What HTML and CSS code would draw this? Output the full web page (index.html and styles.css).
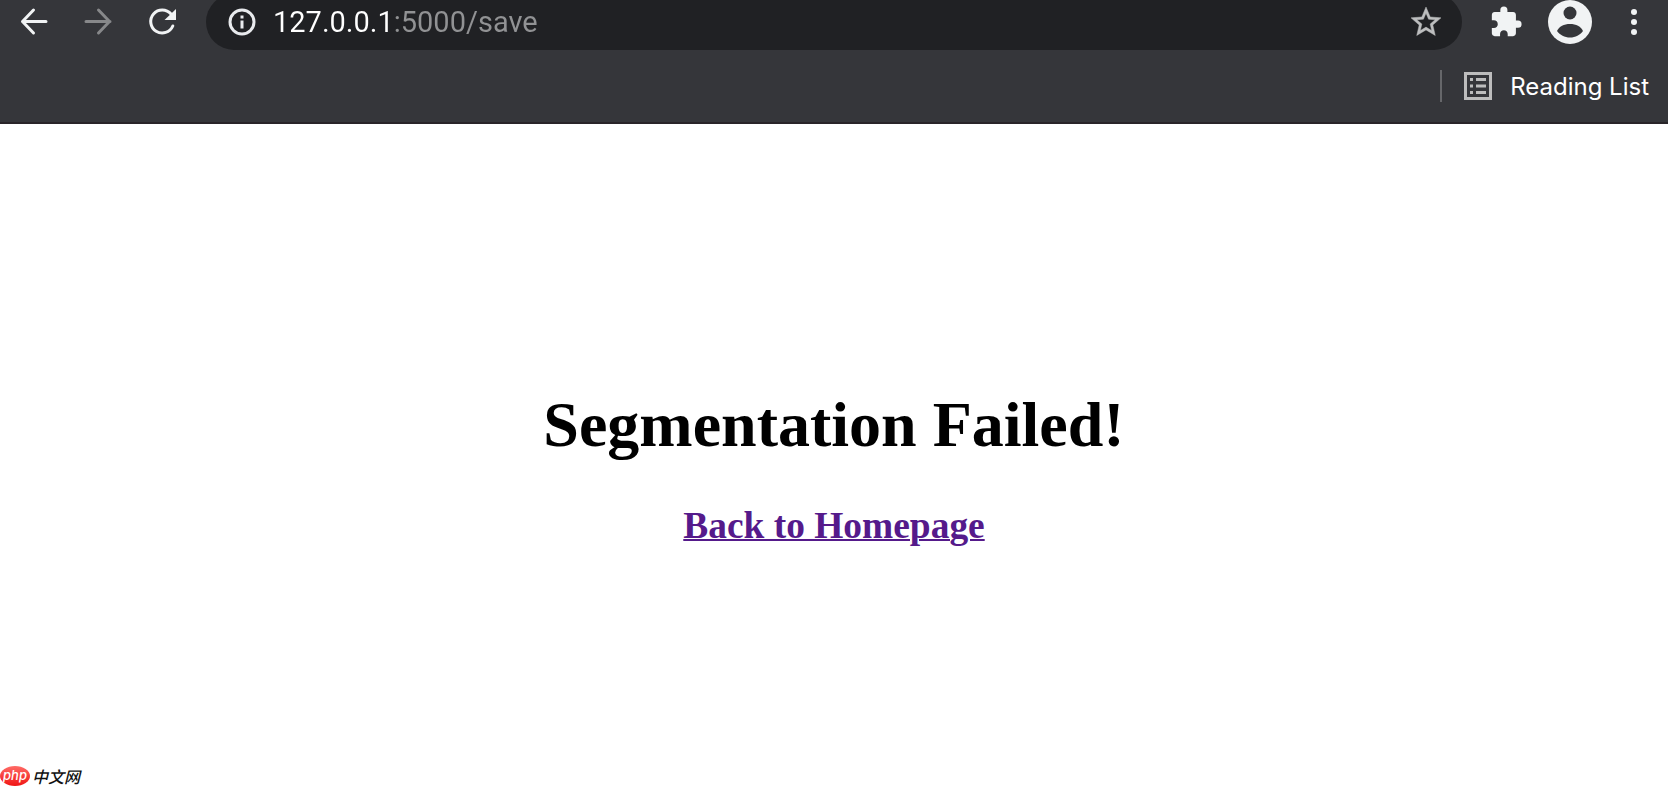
FILE: index.html
```html
<!DOCTYPE html>
<html lang="en">
<head>
    <meta charset="UTF-8">
    <title>127.0.0.1:5000/save</title>
    <link rel="stylesheet" href="styles.css">
</head>
<body>
<header class="browser">
    <div class="toolbar">
        <button class="nav-btn" aria-label="Back">
            <svg class="icon-nav" viewBox="0 0 32 32"><path d="M28 15.500H4.500M15.500 4L4.500 15.500l11 11.500"/></svg>
        </button>
        <button class="nav-btn disabled" aria-label="Forward" disabled>
            <svg class="icon-nav" viewBox="0 0 32 32"><path d="M4 15.500h24M16.500 4l11 11.500-11 11.500"/></svg>
        </button>
        <button class="nav-btn" aria-label="Reload">
            <svg class="icon-nav" viewBox="0 0 32 32">
                <path d="M25 8A11.500 11.500 0 1 0 26.800 20"/>
                <path class="solid" d="M30 3v11H18.500z"/>
            </svg>
        </button>
        <div class="address">
            <button class="info-btn" aria-label="Site information">
                <svg class="icon-info" viewBox="0 0 28 28">
                    <circle cx="14" cy="14" r="12"/>
                    <path d="M14 12.500v8M14 7.500v3"/>
                </svg>
            </button>
            <input class="url" type="text" aria-label="Address" value="127.0.0.1:5000/save">
            <button class="star-btn" aria-label="Bookmark">
                <svg class="icon-star" viewBox="0 0 24 24"><path d="M22 9.240l-7.190-.620L12 2 9.190 8.630 2 9.240l5.460 4.730L5.820 21 12 17.270 18.180 21l-1.630-7.030L22 9.240zM12 15.400l-3.760 2.270 1-4.280-3.320-2.880 4.380-.380L12 6.100l1.710 4.040 4.380.380-3.320 2.880 1 4.280L12 15.400z"/></svg>
            </button>
        </div>
        <div class="actions">
            <button class="action" aria-label="Extensions">
                <svg class="icon-puzzle" viewBox="0 0 24 24"><path d="M20.500 11H19V7c0-1.100-.9-2-2-2h-4V3.500a2.500 2.500 0 0 0-5 0V5H4c-1.100 0-1.990.9-1.990 2v3.800H3.500c1.490 0 2.700 1.210 2.700 2.700s-1.210 2.700-2.700 2.700H2V20c0 1.100.9 2 2 2h3.800v-1.500c0-1.490 1.210-2.700 2.700-2.700s2.700 1.210 2.700 2.700V22H17c1.100 0 2-.9 2-2v-4h1.500a2.500 2.500 0 0 0 0-5z"/></svg>
            </button>
            <button class="action" aria-label="Profile">
                <svg class="icon-profile" viewBox="0 0 44 44">
                    <circle cx="22" cy="22" r="22"/>
                    <circle class="hole" cx="22" cy="13" r="6.500"/>
                    <path class="hole" d="M9 31c2-4.500 7-7 13-7s11 2.500 13 7c-3 4-7.500 6.500-13 6.500S12 35 9 31z"/>
                </svg>
            </button>
            <button class="action" aria-label="Menu">
                <svg class="icon-menu" viewBox="0 0 8 28">
                    <circle cx="4" cy="4" r="3"/><circle cx="4" cy="14" r="3"/><circle cx="4" cy="24" r="3"/>
                </svg>
            </button>
        </div>
    </div>
    <div class="bookmarks">
        <button class="reading-list">
            <svg class="icon-list" viewBox="0 0 28 28">
                <path d="M0 0h28v28H0zM3 3v22h22V3z" fill-rule="evenodd"/>
                <path d="M6 6h3v3H6zM12 6h10v3H12zM6 12.500h3v3H6zM12 12.500h10v3H12zM6 19h3v3H6zM12 19h10v3H12z"/>
            </svg>
            Reading List
        </button>
    </div>
</header>
<main class="content">
    <h1>Segmentation Failed!</h1>
    <h3><a href="/">Back to Homepage</a></h3>
</main>
<div class="watermark">
    <span class="php">php</span>
    <span class="site">中文网</span>
</div>
</body>
</html>
```

FILE: styles.css
```css
body {
    margin: 0;
    min-height: 100vh;
    display: flex;
    flex-direction: column;
    overflow: hidden;
    background: #fff;
    font-family: "Liberation Serif", "Times New Roman", serif;
    font-size: 32px;
}
button {
    padding: 0;
    border: none;
    background: none;
    color: inherit;
    font: inherit;
    cursor: pointer;
}
svg {
    display: block;
    fill: currentColor;
}

/* browser bar */
.browser {
    background: #35363a;
    border-bottom: 2px solid #292529;
    color: #f1f3f4;
    font-family: Inter, sans-serif;
}
.toolbar {
    display: flex;
    align-items: center;
    height: 56px;
    margin-top: -6px;
    padding: 0 2px;
}
.nav-btn {
    display: flex;
    justify-content: center;
    width: 64px;
}
.disabled {
    color: #87888a;
}
.icon-nav {
    width: 32px;
    height: 32px;
    fill: none;
    stroke: currentColor;
    stroke-width: 3;
    stroke-linecap: round;
    stroke-linejoin: round;
}
.icon-nav .solid {
    fill: currentColor;
    stroke: none;
}
.address {
    flex: 1;
    display: flex;
    align-items: center;
    height: 56px;
    margin-left: 12px;
    padding: 0 18px 0 22px;
    box-sizing: border-box;
    border-radius: 28px;
    background: #202124;
}
.icon-info {
    width: 28px;
    height: 28px;
    fill: none;
    stroke: #e8eaed;
    stroke-width: 3;
}
.url {
    flex: 1;
    min-width: 0;
    margin-left: 17px;
    padding: 0;
    border: none;
    outline: none;
    /* host in white, port and path in grey */
    background: linear-gradient(to right, #fff 120px, #919294 120px);
    background-clip: text;
    -webkit-background-clip: text;
    color: transparent;
    font-family: Roboto, sans-serif;
    font-size: 29px;
    line-height: 36px;
}
.icon-star {
    width: 36px;
    height: 36px;
    fill: #bdbebf;
    stroke: #bdbebf;
    stroke-width: 0.3;
}
.actions {
    display: flex;
    align-items: center;
    padding-left: 12px;
}
.action {
    display: flex;
    justify-content: center;
    width: 64px;
}
.icon-puzzle {
    width: 34px;
    height: 34px;
}
.icon-profile {
    width: 44px;
    height: 44px;
}
.hole {
    fill: #35363a;
}
.icon-menu {
    width: 8px;
    height: 28px;
}
.bookmarks {
    display: flex;
    justify-content: flex-end;
    padding: 20px 19px;
}
.reading-list {
    display: flex;
    align-items: center;
    gap: 18px;
    height: 32px;
    padding-left: 22px;
    border-left: 2px solid #66676a;
    color: #fff;
    font-size: 24px;
}
.icon-list {
    width: 28px;
    height: 28px;
    fill: #bdbdbd;
}

/* page */
.content {
    flex: 1;
    display: flex;
    flex-direction: column;
    align-items: center;
    justify-content: center;
    padding-top: 24px;
}
h1 {
    margin: 0 0 42px;
    font-size: 64px;
}
h3 {
    margin: 0;
}
a {
    color: #551a8b;
    text-decoration-thickness: 2px;
}

.watermark {
    position: absolute;
    left: 0;
    bottom: 0;
    display: flex;
    align-items: center;
    gap: 2px;
    height: 20px;
    font-family: "Noto Sans CJK SC", sans-serif;
}
.php {
    width: 30px;
    height: 20px;
    border-radius: 50%;
    background: linear-gradient(#ff6b66, #f01414);
    color: #fff;
    font: italic 500 13px/18px Inter, sans-serif;
    text-align: center;
}
.site {
    color: #111;
    font-size: 16px;
    font-style: italic;
    font-weight: 500;
    line-height: 18px;
}
```
